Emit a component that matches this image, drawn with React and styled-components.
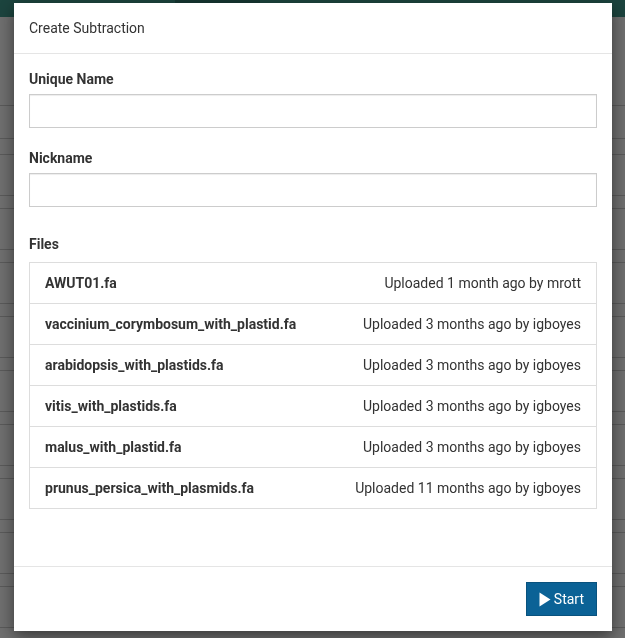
import styled, { createGlobalStyle } from 'styled-components';

const files = [
  { name: 'AWUT01.fa', uploaded: '1 month ago', user: 'mrott' },
  { name: 'vaccinium_corymbosum_with_plastid.fa', uploaded: '3 months ago', user: 'igboyes' },
  { name: 'arabidopsis_with_plastids.fa', uploaded: '3 months ago', user: 'igboyes' },
  { name: 'vitis_with_plastids.fa', uploaded: '3 months ago', user: 'igboyes' },
  { name: 'malus_with_plastid.fa', uploaded: '3 months ago', user: 'igboyes' },
  { name: 'prunus_persica_with_plasmids.fa', uploaded: '11 months ago', user: 'igboyes' },
];

const GlobalStyle = createGlobalStyle`
  html, body {
    margin: 0;
    height: 100%;
    overflow: hidden;
  }
  body {
    font-family: Roboto, 'Liberation Sans', sans-serif;
    font-size: 14px;
    line-height: 20px;
    color: #333;
    background: #dedede;
  }
  * {
    box-sizing: border-box;
  }
`;

export default function App() {
  return (
    <>
      <GlobalStyle />
      <Page>
        <Navbar>
          <NavItem />
          <NavItem $active />
          <NavItem />
        </Navbar>
        <Content>
          <Toolbar />
          <Rows>
            {Array.from({ length: 10 }).map((_, i) => (
              <BgRow key={i} />
            ))}
          </Rows>
        </Content>
      </Page>

      <Backdrop>
        <Modal>
          <Header>Create Subtraction</Header>
          <Body>
            <Label>Unique Name</Label>
            <Input type='text' />
            <Label $top={20}>Nickname</Label>
            <Input type='text' />
            <Label $top={27} $bottom={8}>
              Files
            </Label>
            <FileList>
              {files.map((f) => (
                <FileItem key={f.name}>
                  <strong>{f.name}</strong>
                  <span>
                    Uploaded {f.uploaded} by {f.user}
                  </span>
                </FileItem>
              ))}
            </FileList>
          </Body>
          <Footer>
            <StartButton>
              <svg width='12' height='15' viewBox='0 0 12 15'>
                <path d='M0.5 0.5 L11.5 7.5 L0.5 14.5 Z' fill='#fff' />
              </svg>
              Start
            </StartButton>
          </Footer>
        </Modal>
      </Backdrop>
    </>
  );
}

const Page = styled.div`
  height: 100vh;
  overflow: hidden;
`;

const Navbar = styled.nav`
  height: 17px;
  background: #38887c;
  display: flex;
  padding-left: 90px;
`;

const NavItem = styled.div`
  width: 85px;
  background: ${(p) => (p.$active ? '#2c6e64' : 'transparent')};
`;

const Content = styled.main`
  padding-top: 88px;
`;

const Toolbar = styled.div`
  height: 34px;
  margin: 0 -1px;
  border: 1px solid #b4b4b4;
`;

const Rows = styled.div`
  margin-top: 15px;
  display: flex;
  flex-direction: column;
  gap: 12px;
`;

const BgRow = styled.div`
  height: 42px;
  margin: 0 -1px;
  border: 1px solid #b4b4b4;
`;

const Backdrop = styled.div`
  position: fixed;
  inset: 0;
  background: rgba(0, 0, 0, 0.5);
`;

const Modal = styled.div`
  width: 598px;
  margin: 3px 0 0 14px;
  background: #fff;
  box-shadow: 0 5px 15px rgba(0, 0, 0, 0.5);
`;

const Header = styled.div`
  padding: 15px;
  border-bottom: 1px solid #e5e5e5;
  font-size: 14px;
  line-height: 20px;
`;

const Body = styled.div`
  padding: 15px;
  display: flex;
  flex-direction: column;
`;

const Label = styled.label`
  font-weight: 700;
  margin-top: ${(p) => p.$top || 0}px;
  margin-bottom: ${(p) => (p.$bottom ?? 5)}px;
`;

const Input = styled.input`
  height: 34px;
  width: 100%;
  border: 1px solid #ccc;
  border-radius: 0;
  padding: 6px 12px;
  font: inherit;
  box-shadow: inset 0 1px 1px rgba(0, 0, 0, 0.075);
  outline: none;
`;

const FileList = styled.div`
  margin-bottom: 43px;
`;

const FileItem = styled.div`
  display: flex;
  justify-content: space-between;
  padding: 10px 15px;
  border: 1px solid #ddd;
  margin-bottom: -1px;
  line-height: 20px;
`;

const Footer = styled.div`
  padding: 15px;
  border-top: 1px solid #e5e5e5;
  display: flex;
  justify-content: flex-end;
`;

const StartButton = styled.button`
  display: flex;
  align-items: center;
  gap: 3px;
  height: 34px;
  padding: 6px 12px;
  font: inherit;
  color: #fff;
  background: #0b6296;
  border: 1px solid #09527e;
  border-radius: 0;
`;
